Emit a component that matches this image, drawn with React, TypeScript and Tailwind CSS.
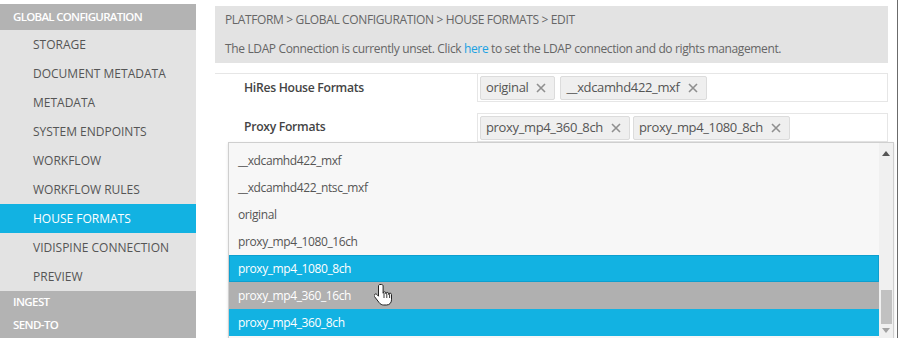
import React from "react";

const navItems = [
  "STORAGE",
  "DOCUMENT METADATA",
  "METADATA",
  "SYSTEM ENDPOINTS",
  "WORKFLOW",
  "WORKFLOW RULES",
  "HOUSE FORMATS",
  "VIDISPINE CONNECTION",
  "PREVIEW",
];

const options = [
  { label: "__xdcamhd422_mxf", state: "none" },
  { label: "__xdcamhd422_ntsc_mxf", state: "none" },
  { label: "original", state: "none" },
  { label: "proxy_mp4_1080_16ch", state: "none" },
  { label: "proxy_mp4_1080_8ch", state: "focus" },
  { label: "proxy_mp4_360_16ch", state: "hover" },
  { label: "proxy_mp4_360_8ch", state: "selected" },
];

function Tag({ label }: { label: string }) {
  return (
    <div className="flex h-[24px] items-center gap-[8px] rounded-[2px] border border-[#dcdcdc] bg-[#efefef] pl-[5px] pr-[8px] text-[13px] tracking-[-0.35px] text-[#555]">
      <span>{label}</span>
      <svg width="10" height="10" viewBox="0 0 10 10">
        <path d="M1 1L9 9M9 1L1 9" stroke="#8f8f8f" strokeWidth="1.6" />
      </svg>
    </div>
  );
}

function HandCursor() {
  return (
    <svg width="20" height="24" viewBox="0 0 20 24" className="absolute left-[178px] top-[283px]">
      <path
        d="M6 1.5c-.9 0-1.5.7-1.5 1.5v10.2l-1.6-1.7c-.7-.7-1.7-.7-2.3 0-.6.6-.6 1.5 0 2.2l4.6 6c1.1 1.5 2.6 2.3 4.5 2.3h2.8c3 0 5-2.2 5-5.2v-5.3c0-.8-.6-1.4-1.4-1.4s-1.4.6-1.4 1.4v-.7c0-.8-.6-1.4-1.4-1.4s-1.4.6-1.4 1.4v-.6c0-.8-.6-1.4-1.4-1.4s-1.4.6-1.4 1.4V3c0-.8-.6-1.5-1.5-1.5z"
        fill="#fff"
        stroke="#222"
        strokeWidth="1"
        strokeLinejoin="round"
      />
      <path d="M10 10v5M12.8 10.5v4.5M15.6 11.2v3.8" stroke="#222" strokeWidth="0.9" />
    </svg>
  );
}

export default function App() {
  return (
    <div
      className="relative flex h-[338px] w-[900px] overflow-hidden bg-white"
      style={{ fontFamily: '"Open Sans", "Noto Sans", sans-serif' }}
    >
      {/* Sidebar */}
      <div className="mt-[4px] flex w-[196px] shrink-0 flex-col bg-[#e3e3e3]">
        <div className="flex h-[26px] items-center bg-[#b3b3b3] pl-[13px] text-[11.5px] font-semibold tracking-[-0.7px] text-white">
          GLOBAL CONFIGURATION
        </div>
        {navItems.map((item) => (
          <div
            key={item}
            className={
              item === "HOUSE FORMATS"
                ? "flex h-[29px] items-center bg-[#12b2e2] pl-[33px] text-[12px] text-white"
                : "flex h-[29px] items-center pl-[33px] text-[12px] text-[#555]"
            }
          >
            {item}
          </div>
        ))}
        <div className="flex flex-1 flex-col bg-[#b3b3b3]">
          <div className="flex h-[22px] items-center pl-[13px] text-[11.5px] font-semibold tracking-[-0.6px] text-white">INGEST</div>
          <div className="flex h-[24px] items-center pl-[13px] text-[11.5px] font-semibold tracking-[-0.6px] text-white">SEND-TO</div>
        </div>
      </div>

      {/* Main */}
      <div className="relative flex flex-1 flex-col pl-[19px] pr-[12px] pt-[6px]">
        <div className="flex h-[57px] flex-col justify-between bg-[#e3e3e3] px-[10px] pb-[5px] pt-[5px] text-[12px] tracking-[-0.36px] text-[#666]">
          <div>PLATFORM &gt; GLOBAL CONFIGURATION &gt; HOUSE FORMATS &gt; EDIT</div>
          <div>
            The LDAP Connection is currently unset. Click <span className="text-[#1ba1e2]">here</span> to set the
            LDAP connection and do rights management.
          </div>
        </div>

        <div className="mt-[10px] border-t border-[#e6e6e6]">
          <div className="flex h-[28px] items-center">
            <div className="w-[262px] shrink-0 pl-[29px] text-[12.2px] font-semibold tracking-[-0.3px] text-[#444]">HiRes House Formats</div>
            <div className="flex h-[28px] flex-1 items-center gap-[5px] border-x border-b border-[#e6e6e6] pl-[2px]">
              <Tag label="original" />
              <Tag label="__xdcamhd422_mxf" />
            </div>
          </div>
          <div className="mt-[11px] flex h-[29px] items-center">
            <div className="w-[262px] shrink-0 pl-[29px] text-[12.2px] font-semibold tracking-[-0.3px] text-[#444]">Proxy Formats</div>
            <div className="flex h-[29px] flex-1 items-center gap-[3px] border border-[#e6e6e6] pl-[2px]">
              <Tag label="proxy_mp4_360_8ch" />
              <Tag label="proxy_mp4_1080_8ch" />
            </div>
          </div>
        </div>

        {/* Dropdown */}
        <div className="absolute left-[32px] top-[142px] flex h-[200px] w-[666px] border border-[#cfcfcf] bg-[#f7f7f7] shadow-sm">
          <div className="flex flex-1 flex-col pt-[4px]">
            {options.map((o) => (
              <div
                key={o.label}
                className={
                  o.state === "focus"
                    ? "flex h-[27px] items-center border border-[#0d9fcf] bg-[#12b2e2] pl-[8px] text-[12px] tracking-[-0.4px] text-white"
                    : o.state === "hover"
                    ? "flex h-[27px] items-center bg-[#b0b0b0] pl-[9px] text-[12px] tracking-[-0.4px] text-white"
                    : o.state === "selected"
                    ? "flex h-[27px] items-center bg-[#12b2e2] pl-[9px] text-[12px] tracking-[-0.4px] text-white"
                    : "flex h-[27px] items-center pl-[9px] text-[12px] tracking-[-0.4px] text-[#555]"
                }
              >
                {o.label}
              </div>
            ))}
          </div>
          <div className="relative flex w-[14px] flex-col items-center bg-[#f0f0f0]">
            <svg width="8" height="5" viewBox="0 0 8 5" className="mt-[8px]">
              <path d="M0 5L4 0L8 5Z" fill="#555" />
            </svg>
            <div className="flex-1" />
            <div className="mb-[4px] h-[34px] w-[11px] bg-[#c1c1c1]" />
            <svg width="8" height="5" viewBox="0 0 8 5" className="mb-[8px]">
              <path d="M0 0L4 5L8 0Z" fill="#a3a3a3" />
            </svg>
          </div>
        </div>

        <HandCursor />
      </div>

      {/* Window edge */}
      <div className="absolute left-[897px] top-0 h-[338px] w-[1px] bg-[#6b6b6b]" />
    </div>
  );
}
